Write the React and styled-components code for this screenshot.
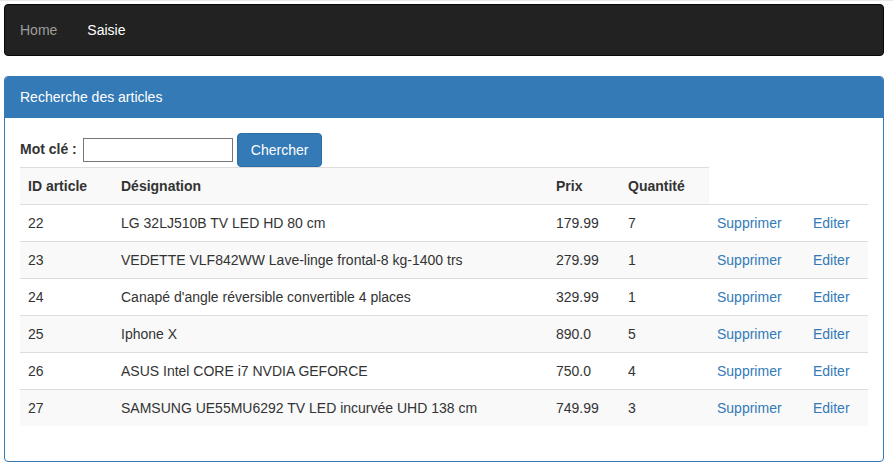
import React from "react";
import styled, { createGlobalStyle } from "styled-components";

const Global = createGlobalStyle`
  html, body { margin: 0; padding: 0; background: #fff; }
  body {
    font-family: "Liberation Sans", Arial, Helvetica, sans-serif;
    font-size: 14px;
    line-height: 1.42857;
    color: #333;
  }
  * { box-sizing: border-box; }
`;

const Page = styled.div`
  width: 893px;
  border-top: 1px solid #e8e8e8;
  padding: 3px 9px 0 4px;
`;

const Navbar = styled.nav`
  display: flex;
  min-height: 51px;
  background: #222;
  border: 1px solid #080808;
  border-radius: 4px;
  margin-bottom: 20px;
`;

const NavLink = styled.a`
  display: block;
  padding: 15px;
  line-height: 20px;
  color: ${(p) => (p.$active ? "#fff" : "#9d9d9d")};
  text-decoration: none;
`;

const Panel = styled.section`
  border: 1px solid #337ab7;
  border-radius: 4px;
  background: #fff;
  margin-bottom: 10px;
  overflow: hidden;
`;

const PanelHeading = styled.div`
  background: #337ab7;
  color: #fff;
  padding: 10px 15px;
  font-size: 14px;
  line-height: 20px;
  border-bottom: 1px solid #337ab7;
`;

const PanelBody = styled.div`
  padding: 15px;
`;

const SearchForm = styled.form`
  display: flex;
  align-items: center;
  gap: 4px;
`;

const Label = styled.label`
  font-weight: bold;
  padding-right: 2px;
`;

const TextInput = styled.input`
  width: 150px;
  height: 24px;
  border: 1px solid #767676;
  border-radius: 0;
  padding: 1px 2px;
  font: inherit;
`;

const Button = styled.button`
  height: 34px;
  padding: 6px 13px;
  font: inherit;
  font-size: 14px;
  line-height: 20px;
  color: #fff;
  background: #337ab7;
  border: 1px solid #2e6da4;
  border-radius: 4px;
`;

const Table = styled.table`
  width: 848px;
  border-collapse: collapse;
  border-spacing: 0;
  margin-bottom: 20px;
  table-layout: fixed;
`;

const Row = styled.tr``;

const Th = styled.th`
  text-align: left;
  font-weight: bold;
  padding: 8px;
  line-height: 20px;
  border-top: 1px solid #ddd;
  background: #f9f9f9;
`;

const Td = styled.td`
  padding: 8px;
  line-height: 20px;
  border-top: 1px solid #ddd;
  background: ${(p) => (p.$striped ? "#f9f9f9" : "transparent")};
  white-space: nowrap;
`;

const Link = styled.a`
  color: #337ab7;
  text-decoration: none;
`;

const articles = [
  { id: 22, des: "LG 32LJ510B TV LED HD 80 cm", prix: "179.99", qte: 7 },
  { id: 23, des: "VEDETTE VLF842WW Lave-linge frontal-8 kg-1400 trs", prix: "279.99", qte: 1 },
  { id: 24, des: "Canapé d'angle réversible convertible 4 places", prix: "329.99", qte: 1 },
  { id: 25, des: "Iphone X", prix: "890.0", qte: 5 },
  { id: 26, des: "ASUS Intel CORE i7 NVDIA GEFORCE", prix: "750.0", qte: 4 },
  { id: 27, des: "SAMSUNG UE55MU6292 TV LED incurvée UHD 138 cm", prix: "749.99", qte: 3 },
];

export default function App() {
  return (
    <Page>
      <Global />
      <Navbar>
        <NavLink href="#">Home</NavLink>
        <NavLink href="#" $active>Saisie</NavLink>
      </Navbar>
      <Panel>
        <PanelHeading>Recherche des articles</PanelHeading>
        <PanelBody>
          <SearchForm onSubmit={(e) => e.preventDefault()}>
            <Label>Mot clé :</Label>
            <TextInput type="text" />
            <Button type="submit">Chercher</Button>
          </SearchForm>
          <Table>
            <colgroup>
              <col style={{ width: 93 }} />
              <col style={{ width: 435 }} />
              <col style={{ width: 72 }} />
              <col style={{ width: 89 }} />
              <col style={{ width: 96 }} />
              <col style={{ width: 63 }} />
            </colgroup>
            <tbody>
              <Row>
                <Th>ID article</Th>
                <Th>Désignation</Th>
                <Th>Prix</Th>
                <Th>Quantité</Th>
              </Row>
              {articles.map((a, i) => {
                const s = i % 2 === 1;
                return (
                  <Row key={a.id}>
                    <Td $striped={s}>{a.id}</Td>
                    <Td $striped={s}>{a.des}</Td>
                    <Td $striped={s}>{a.prix}</Td>
                    <Td $striped={s}>{a.qte}</Td>
                    <Td $striped={s}><Link href="#">Supprimer</Link></Td>
                    <Td $striped={s}><Link href="#">Editer</Link></Td>
                  </Row>
                );
              })}
            </tbody>
          </Table>
        </PanelBody>
      </Panel>
    </Page>
  );
}
